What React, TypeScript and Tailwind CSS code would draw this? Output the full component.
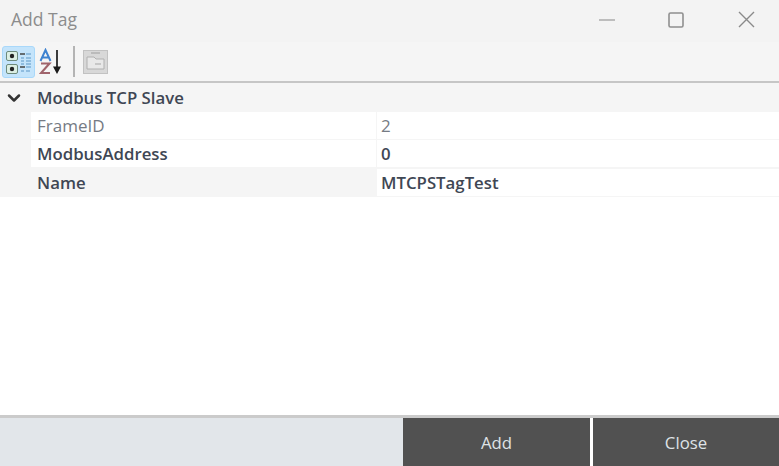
import { ChevronDown } from "lucide-react"

const rows = [
  { name: "FrameID", value: "2", dim: true },
  { name: "ModbusAddress", value: "0" },
  { name: "Name", value: "MTCPSTagTest", shaded: true },
]

function CategorizedIcon() {
  return (
    <svg width="28" height="28" viewBox="0 0 28 28">
      <rect x="1.5" y="3.5" width="11" height="9" rx="1.5" fill="#dcefe4" stroke="#6d8a7c" />
      <circle cx="7" cy="8" r="2.2" fill="#222" />
      <rect x="1.5" y="16.5" width="11" height="9" rx="1.5" fill="#dcefe4" stroke="#6d8a7c" />
      <circle cx="7" cy="21" r="2.2" fill="#222" />
      <path d="M15 6h5M15 19h5" stroke="#444" strokeWidth="1.5" />
      <path d="M16 10h3M21 10h5M16 13h3M21 13h5M16 16h3M21 16h5M21 6h5M21 19h5M16 23h3M21 23h4" stroke="#7fb0d8" strokeWidth="1.6" />
    </svg>
  )
}

function SortIcon() {
  return (
    <svg width="24" height="28" viewBox="0 0 24 28">
      <path d="M1.5 13 L6.5 2 L11.5 13 M3.5 9.5h6" fill="none" stroke="#3f83d0" strokeWidth="2" />
      <path d="M2 15.5h8.5L2 25h9" fill="none" stroke="#a0646c" strokeWidth="2.1" />
      <path d="M18 2v19" stroke="#1a1a1a" strokeWidth="1.7" />
      <path d="M14 18.5h8L18 26z" fill="#1a1a1a" />
    </svg>
  )
}

function PagesIcon() {
  return (
    <svg width="25" height="24" viewBox="0 0 25 24">
      <rect x="0.5" y="0.5" width="24" height="23" fill="#d8d8d8" stroke="#c2c2c2" />
      <path d="M8 3h9" stroke="#a8a8a8" strokeWidth="1.2" />
      <path d="M4 7h7l2 2h8v10H4z" fill="#e8e8e8" stroke="#b0b0b0" />
      <path d="M12 14h6" stroke="#a5a5a5" />
    </svg>
  )
}

export default function App() {
  return (
    <div className="w-[779px] h-[466px] flex flex-col overflow-hidden bg-white text-[16.8px] font-semibold font-['Open_Sans',sans-serif] text-[#3f4754]">
      <div className="h-[42px] shrink-0 flex items-center pb-[3px] bg-[#f3f3f3]">
        <span className="pl-[11px] grow text-[17.5px] font-normal text-[#8c8c8c]">Add Tag</span>
        <svg width="16" height="2" className="mr-[53px]">
          <path d="M0 1h16" stroke="#9a9a9a" strokeWidth="1.2" />
        </svg>
        <svg width="16" height="16" className="mr-[54px]">
          <rect x="1" y="1" width="14" height="14" rx="1.5" fill="none" stroke="#8f8f8f" strokeWidth="1.6" />
        </svg>
        <svg width="17" height="17" className="mr-[24px]">
          <path d="M1 1l15 15M16 1L1 16" stroke="#8a8a8a" strokeWidth="1.4" />
        </svg>
      </div>

      <div className="h-[41px] shrink-0 flex items-center pl-[2px] bg-[#f5f5f5] border-b-2 border-[#c6c6c6]">
        <div className="w-[33px] h-[32px] flex items-center justify-center rounded-[3px] bg-[#c4e4fb] border border-[#a9d8fa]">
          <CategorizedIcon />
        </div>
        <div className="ml-[4px] flex">
          <SortIcon />
        </div>
        <div className="w-[2px] h-[31px] ml-[10px] mr-[8px] bg-[#b4b4b4]" />
        <PagesIcon />
      </div>

      <div className="grow">
        <div className="h-[29px] flex items-center bg-[#f5f5f5]">
          <div className="w-[31px] pl-[4px]">
            <ChevronDown className="w-[20px] h-[20px] text-[#333]" strokeWidth={3} />
          </div>
          <span className="pl-[6px]">Modbus TCP Slave</span>
        </div>
        <div className="flex flex-col">
          {rows.map((row) => (
            <div key={row.name} className={`pl-[31px] flex bg-[#f5f5f5] ${row.shaded ? "h-[29px] pt-px" : "h-[28px]"}`}>
              <div
                className={`w-[345px] mr-px flex items-center pl-[6px] border-b border-[#f5f5f5] ${
                  row.shaded ? "bg-[#f5f5f5]" : "bg-white"
                } ${row.dim ? "text-[17px] font-medium text-[#767b84]" : ""}`}
              >
                {row.name}
              </div>
              <div
                className={`grow flex items-center pl-[4px] bg-white border-b border-[#f5f5f5] ${
                  row.dim ? "text-[17px] font-medium text-[#767b84]" : ""
                }`}
              >
                {row.value}
              </div>
            </div>
          ))}
        </div>
      </div>

      <div className="h-[51px] shrink-0 flex border-t-[3px] border-[#cbcbcb] bg-white">
        <div className="w-[403px] bg-[#e2e6ea]" />
        <button className="w-[187px] pt-[2px] bg-[#515151] text-[#dfe3e6] font-medium">Add</button>
        <button className="w-[186px] ml-[3px] pt-[2px] bg-[#515151] text-[#dfe3e6] font-medium">Close</button>
      </div>
    </div>
  )
}
